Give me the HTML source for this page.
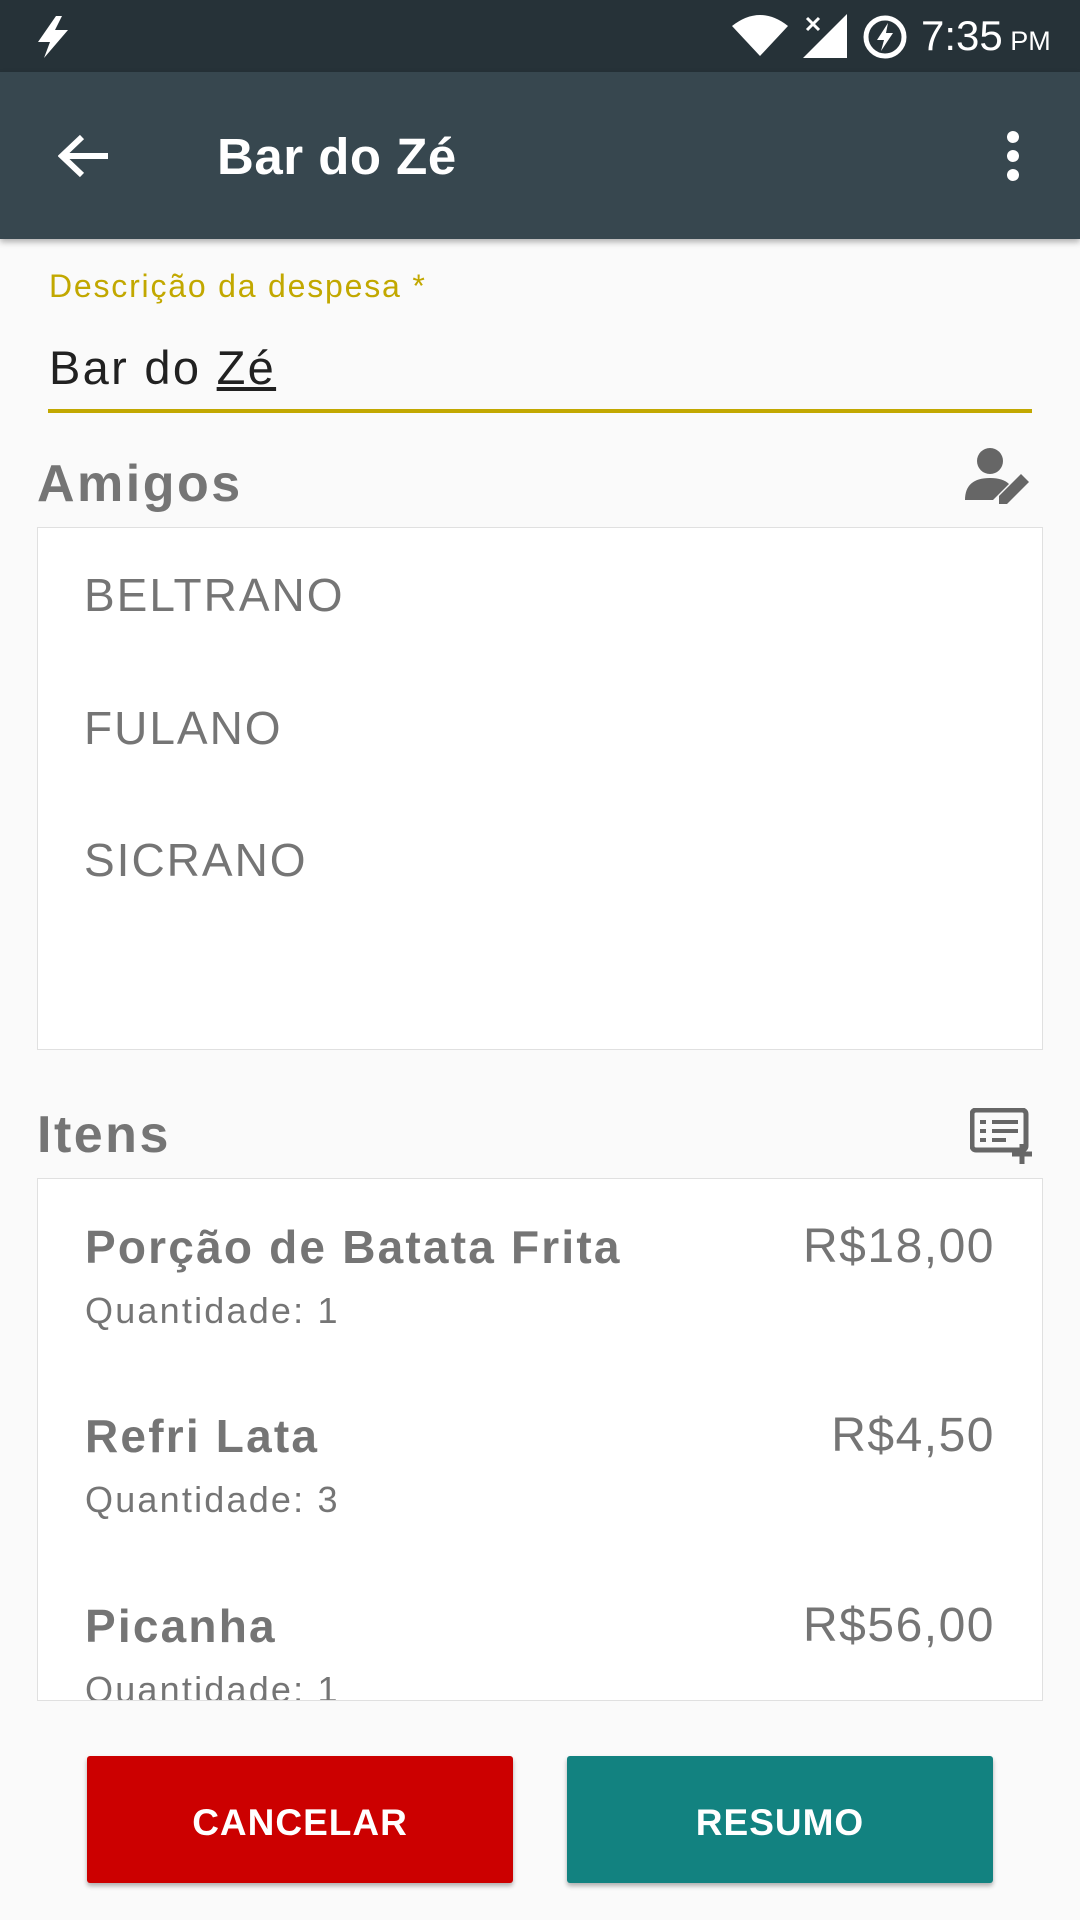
<!DOCTYPE html>
<html><head><meta charset="utf-8"><style>
*{margin:0;padding:0;box-sizing:border-box}
body{width:1080px;height:1920px;background:#fafafa;font-family:"Liberation Sans",sans-serif;position:relative;overflow:hidden;color:#757575}
.abs{position:absolute;white-space:nowrap}
#sb{position:absolute;left:0;top:0;width:1080px;height:72px;background:#263238}
#tb{position:absolute;left:0;top:72px;width:1080px;height:167px;background:#37474F;box-shadow:0 3px 6px rgba(0,0,0,.3)}
.box{position:absolute;background:#fff;border:1px solid #e0e0e0}
.btn{position:absolute;height:127px;color:#fff;font-weight:bold;font-size:37px;letter-spacing:1px;display:flex;align-items:center;justify-content:center;border-radius:3px;box-shadow:0 3px 5px rgba(0,0,0,.3)}
.name{position:absolute;left:84px;font-size:46px;color:#757575;letter-spacing:2px}
.it{position:absolute;left:84px;font-size:46px;font-weight:bold;color:#757575;letter-spacing:2.2px}
.q{position:absolute;left:84px;font-size:36px;color:#757575;letter-spacing:2.2px}
.p{position:absolute;right:85px;font-size:48px;color:#757575;text-align:right;letter-spacing:1.5px}
</style></head><body>
<div id="sb">
<svg class="abs" style="left:36px;top:16px" width="34" height="42" viewBox="0 0 34 42"><path d="M20 0 L2 26 H14 L8 42 L32 14 H19 L26 0Z" fill="#fff"/></svg>
<svg class="abs" style="left:732px;top:14px" width="56" height="42" viewBox="0 0 56 42"><path d="M0 12 Q28 -10 56 12 L28 42Z" fill="#fff"/></svg>
<svg class="abs" style="left:803px;top:14px" width="44" height="44" viewBox="0 0 44 44"><path d="M44 0 V44 H0Z" fill="#fff"/><path d="M4 4 L16 16 M16 4 L4 16" stroke="#fff" stroke-width="3"/></svg>
<svg class="abs" style="left:862px;top:14px" width="46" height="46" viewBox="0 0 46 46"><circle cx="23" cy="23" r="19" fill="none" stroke="#fff" stroke-width="5"/><path d="M26 9 L15 26 H22 L19 37 L31 19 H24Z" fill="#fff"/></svg>
<div class="abs" style="left:921px;top:12px;font-size:42px;color:#fff">7:35<span style="font-size:27px"> PM</span></div>
</div>
<div id="tb">
<svg class="abs" style="left:58px;top:62px" width="52" height="44" viewBox="0 0 52 44"><path d="M50 22 H6 M24 3 L4 22 L24 41" stroke="#fff" stroke-width="6" fill="none"/></svg>
<div class="abs" style="left:217px;top:55px;font-size:51px;color:#fff;font-weight:bold;letter-spacing:0.5px">Bar do Zé</div>
<svg class="abs" style="left:1003px;top:58px" width="20" height="52" viewBox="0 0 20 52"><circle cx="10" cy="7" r="6" fill="#fff"/><circle cx="10" cy="26" r="6" fill="#fff"/><circle cx="10" cy="45" r="6" fill="#fff"/></svg>
</div>
<div class="abs" style="left:49px;top:268px;font-size:32px;color:#C2A800;letter-spacing:1.8px">Descrição da despesa *</div>
<div class="abs" style="left:49px;top:340px;font-size:47px;color:#212121;letter-spacing:2.3px">Bar do <u>Zé</u></div>
<div class="abs" style="left:48px;top:409px;width:984px;height:4px;background:#C2A800"></div>
<div class="abs" style="left:37px;top:454px;font-size:52px;font-weight:bold;color:#757575;letter-spacing:2.5px">Amigos</div>
<svg class="abs" style="left:963px;top:446px" width="70" height="62" viewBox="0 0 70 62"><circle cx="27" cy="15" r="13" fill="#666"/><path d="M2 54 Q2 32 27 32 Q40 32 46 38 L30 54Z" fill="#666"/><path d="M36 58 L36 50 L58 28 L66 36 L44 58Z" fill="#666"/></svg>
<div class="box" style="left:37px;top:527px;width:1006px;height:523px"></div>
<div class="name" style="top:568px">BELTRANO</div>
<div class="name" style="top:701px">FULANO</div>
<div class="name" style="top:833px">SICRANO</div>
<div class="abs" style="left:37px;top:1105px;font-size:52px;font-weight:bold;color:#757575;letter-spacing:2.5px">Itens</div>
<svg class="abs" style="left:970px;top:1108px" width="64" height="56" viewBox="0 0 64 56"><rect x="2" y="2" width="54" height="40" rx="4" fill="none" stroke="#666" stroke-width="5"/><path d="M10 14 H16 M22 14 H48 M10 23 H16 M22 23 H48 M10 32 H16 M22 32 H36" stroke="#666" stroke-width="4"/><path d="M52 36 V56 M42 46 H62" stroke="#666" stroke-width="5"/></svg>
<div class="box" style="left:37px;top:1178px;width:1006px;height:523px;overflow:hidden">
<div class="it" style="left:47px;top:41px">Porção de Batata Frita</div>
<div class="q" style="left:47px;top:111px">Quantidade: 1</div>
<div class="p" style="right:47px;top:40px">R$18,00</div>
<div class="it" style="left:47px;top:230px">Refri Lata</div>
<div class="q" style="left:47px;top:300px">Quantidade: 3</div>
<div class="p" style="right:47px;top:229px">R$4,50</div>
<div class="it" style="left:47px;top:420px">Picanha</div>
<div class="q" style="left:47px;top:490px">Quantidade: 1</div>
<div class="p" style="right:47px;top:419px">R$56,00</div>
</div>
<div class="btn" style="left:87px;top:1756px;width:426px;background:#CC0000;padding-top:6px">CANCELAR</div>
<div class="btn" style="left:567px;top:1756px;width:426px;background:#128280;padding-top:6px">RESUMO</div>
</body></html>
